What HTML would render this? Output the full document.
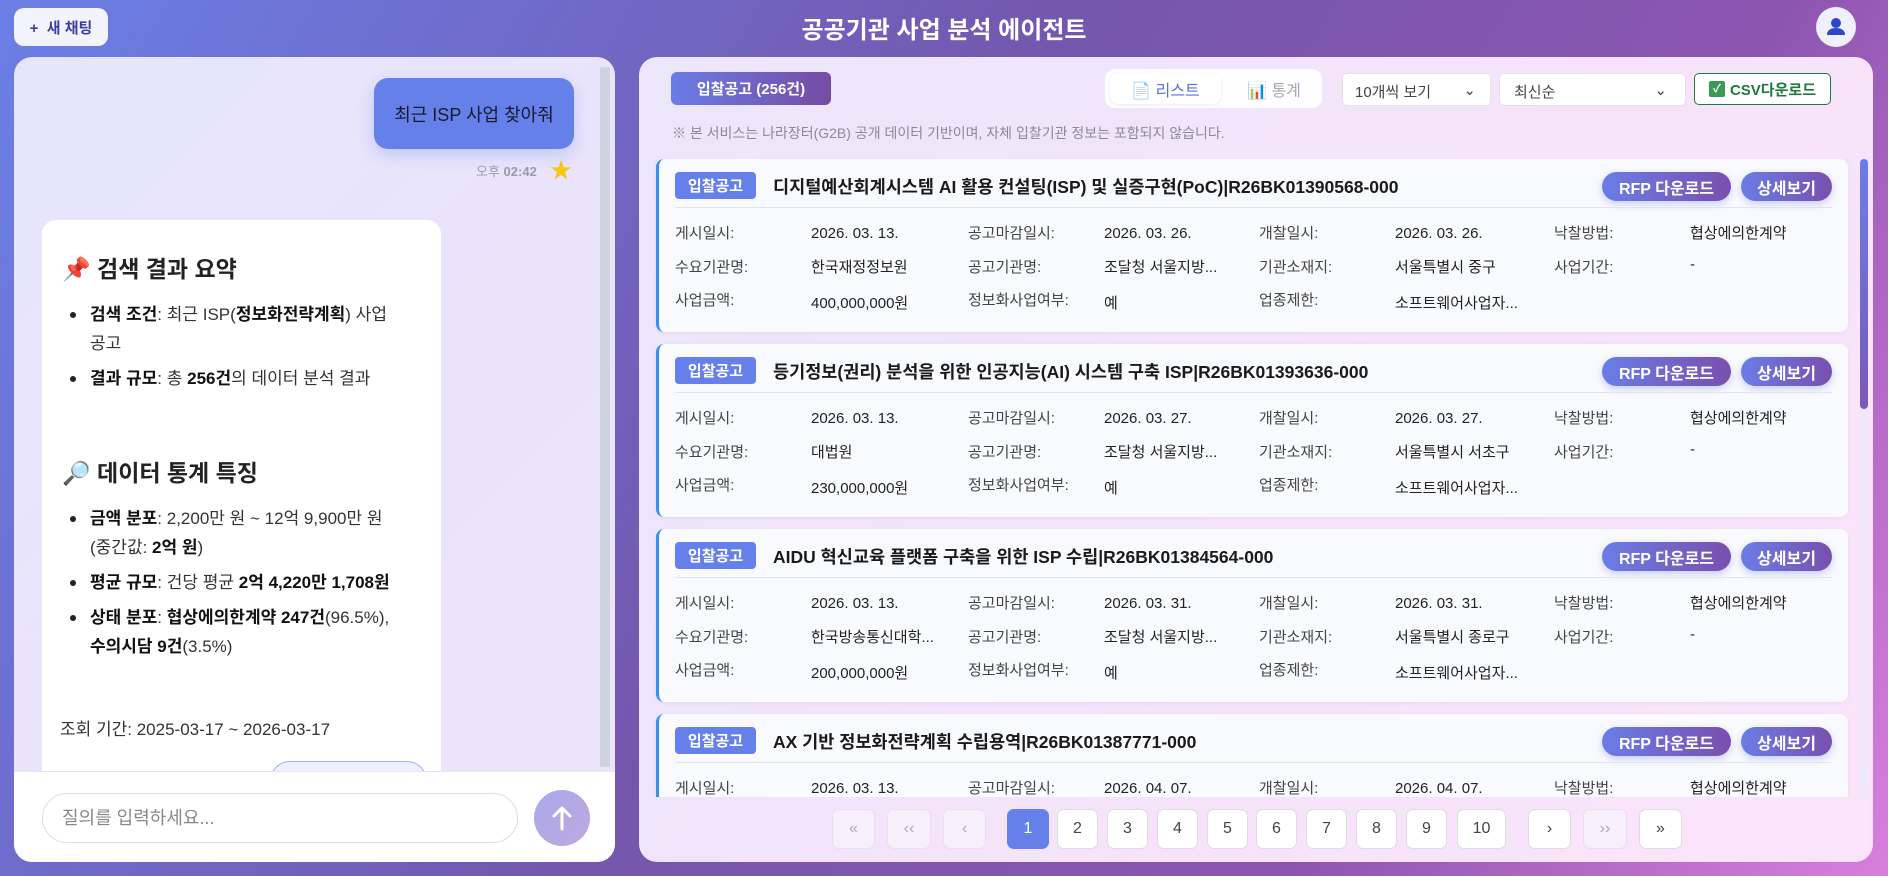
<!DOCTYPE html>
<html><head><meta charset="utf-8"><style>
*{box-sizing:border-box;margin:0;padding:0}
body{width:1888px;height:876px;overflow:hidden;position:relative;font-family:"Liberation Sans","Noto Sans CJK KR",sans-serif;background:linear-gradient(120deg,#6a7fe6 0%,#7457ad 45%,#8c55b0 75%,#d97fdc 100%);color:#222;word-break:keep-all}
.abs{position:absolute}
.newchat{left:14px;top:8px;width:94px;height:38px;background:#f3f3fd;border-radius:10px;color:#3b3fa0;font-size:15px;display:flex;align-items:center;justify-content:center;font-weight:600}
.title{left:0;width:1888px;top:10px;text-align:center;color:#fff;font-size:24px;font-weight:700}
.avatar{left:1816px;top:7px;width:40px;height:40px;border-radius:50%;background:#eef0fb}
.left{left:14px;top:57px;width:601px;height:805px;border-radius:18px;background:linear-gradient(135deg,#e6e5fc,#ede4fa);overflow:hidden}
.right{left:639px;top:57px;width:1234px;height:805px;border-radius:18px;background:linear-gradient(120deg,#ece6fb,#f6e3fa 60%,#fbe4fb)}
.bubble{left:360px;top:21px;width:200px;height:71px;border-radius:14px;background:#6680ea;color:#1a1a2e;font-size:18px;display:flex;align-items:center;justify-content:center;box-shadow:0 6px 16px rgba(102,128,234,.3)}
.acard{left:28px;top:163px;width:399px;height:620px;background:#fff;border-radius:14px}
.acard h3{position:absolute;left:20px;font-size:23px;font-weight:700;color:#222}
.acard ul{position:absolute;left:28px;width:345px;font-size:17px;line-height:29px;color:#333;list-style:none}
.acard li{position:relative;padding-left:20px;margin-bottom:6px}
.acard li:before{content:"";position:absolute;left:0;top:12px;width:6px;height:6px;border-radius:50%;background:#222}
.acard b{color:#111}
.bottom{left:0;top:714px;width:601px;height:91px;background:#fff;border-top:1px solid #e5e5ee}
.input{left:28px;top:21px;width:476px;height:50px;border-radius:25px;border:1px solid #ddd;font-size:18px;color:#888;padding-left:19px;line-height:48px}
.send{left:520px;top:18px;width:56px;height:56px;border-radius:50%;background:linear-gradient(135deg,#a7aaee,#c0a8dc)}
.btn{position:absolute;display:flex;align-items:center;justify-content:center}
.card{position:absolute;left:17px;width:1192px;height:173px;background:#f9fafd;border-radius:8px;border-left:3px solid #3b8df0;box-shadow:0 1px 4px rgba(0,0,0,.06);overflow:hidden}
.badge{left:16px;top:13px;width:81px;height:27px;background:#6680ea;color:#fff;font-size:15px;border-radius:4px;font-weight:600}
.ctitle{position:absolute;left:114px;top:15px;font-size:17.5px;font-weight:700;color:#1a1a1a;white-space:nowrap}
.pill{height:29px;top:13px;border-radius:15px;background:linear-gradient(90deg,#6a7de6,#7a4fae);color:#fff;font-size:16px;font-weight:700;box-shadow:0 3px 8px rgba(102,126,234,.35)}
.div{position:absolute;left:16px;right:16px;top:48px;height:1px;background:#e2e4ea}
.lab,.val{position:absolute;font-size:15px;white-space:nowrap}
.lab{color:#444}.val{color:#222}
.pg{position:absolute;top:809px;height:40px;border-radius:7px;background:#fff;border:1px solid #ddd;font-size:16px;color:#444;display:flex;align-items:center;justify-content:center}
.pg.dis{background:#f7effc;color:#aaa;border-color:#eadcf3}
</style></head><body>
<div class="abs newchat">+&nbsp; 새 채팅</div>
<div class="abs title">공공기관 사업 분석 에이전트</div>
<div class="abs avatar"><svg width="40" height="40" viewBox="0 0 40 40"><circle cx="20" cy="16" r="5" fill="#2f46c8"/><path d="M11 28c0-5 4-7 9-7s9 2 9 7z" fill="#2f46c8"/></svg></div>

<div class="abs left">
  <div class="abs" style="left:586px;top:10px;width:10px;height:700px;background:#cdd3df;border-radius:2px"></div>
  <div class="abs bubble">최근 ISP 사업 찾아줘</div>
  <div class="abs" style="left:462px;top:104px;font-size:13px;color:#9a9aa8">오후 <b>02:42</b></div>
  <div class="abs" style="left:536px;top:96px;font-size:22px;color:#f5c518">★</div>
  <div class="abs acard">
    <h3 style="top:30px">📌 검색 결과 요약</h3>
    <ul style="top:80px"><li><b>검색 조건</b>: 최근 ISP(<b>정보화전략계획</b>) 사업 공고</li><li><b>결과 규모</b>: 총 <b>256건</b>의 데이터 분석 결과</li></ul>
    <h3 style="top:234px">🔎 데이터 통계 특징</h3>
    <ul style="top:284px"><li><b>금액 분포</b>: 2,200만 원 ~ 12억 9,900만 원 (중간값: <b>2억 원</b>)</li><li><b>평균 규모</b>: 건당 평균 <b>2억 4,220만 1,708원</b></li><li><b>상태 분포</b>: <b>협상에의한계약 247건</b>(96.5%), <b>수의시담 9건</b>(3.5%)</li></ul>
    <div class="abs" style="left:18px;top:495px;font-size:17px;color:#333">조회 기간: 2025-03-17 ~ 2026-03-17</div>
    <div class="abs" style="left:228px;top:541px;width:157px;height:40px;border:1px solid #a5b0f3;border-radius:20px;background:#eef0ff"></div>
  </div>
  <div class="abs bottom">
    <div class="abs input">질의를 입력하세요...</div>
    <div class="abs send"><svg width="56" height="56" viewBox="0 0 56 56"><path d="M28 39V18M20 26l8-8 8 8" stroke="#fff" stroke-width="3" fill="none" stroke-linecap="round" stroke-linejoin="round"/></svg></div>
  </div>
</div>

<div class="abs right">
  <div class="btn" style="left:32px;top:15px;width:160px;height:33px;border-radius:6px;background:linear-gradient(90deg,#6a7de6,#764ba2);color:#fff;font-size:15px;font-weight:700">입찰공고 (256건)</div>
  <div class="abs" style="left:466px;top:12px;width:217px;height:39px;border-radius:10px;background:#fff;opacity:.9"></div>
  <div class="btn" style="left:471px;top:16px;width:111px;height:31px;border-radius:8px;background:#fff;box-shadow:0 1px 3px rgba(0,0,0,.08);color:#5a6fe0;font-size:16px">📄&nbsp;리스트</div>
  <div class="btn" style="left:590px;top:16px;width:90px;height:31px;color:#aaa;font-size:16px">📊&nbsp;통계</div>
  <div class="abs" style="left:703px;top:16px;width:149px;height:33px;background:#fff;border:1px solid #e2e2e8;border-radius:5px;font-size:15px;color:#444;padding:7px 12px">10개씩 보기<span style="position:absolute;right:14px">⌄</span></div>
  <div class="abs" style="left:860px;top:16px;width:187px;height:33px;background:#fff;border:1px solid #e2e2e8;border-radius:5px;font-size:15px;color:#444;padding:7px 14px">최신순<span style="position:absolute;right:18px">⌄</span></div>
  <div class="btn" style="left:1055px;top:16px;width:137px;height:32px;border:1px solid #1e7a3e;border-radius:5px;background:#fff;color:#1e7a3e;font-size:15px;font-weight:700"><span style="display:inline-block;width:16px;height:16px;background:#3a9a5a;color:#fff;font-size:11px;line-height:16px;text-align:center;border-radius:2px;margin-right:5px">✓</span>CSV다운로드</div>
  <div class="abs" style="left:33px;top:66px;font-size:14px;color:#8a8a96">※ 본 서비스는 나라장터(G2B) 공개 데이터 기반이며, 자체 입찰기관 정보는 포함되지 않습니다.</div>
  <div class="abs" style="left:1221px;top:102px;width:8px;height:640px;background:#efe8f8;border-radius:4px"></div>
  <div class="abs" style="left:1221px;top:102px;width:8px;height:250px;background:linear-gradient(#6a7de6,#7a5ab8);border-radius:4px"></div>
  <div class="abs" style="left:0;top:102px;width:1220px;height:638px;overflow:hidden">
  <div class="card" style="top:0">
    <div class="btn badge">입찰공고</div><div class="ctitle">디지털예산회계시스템 AI 활용 컨설팅(ISP) 및 실증구현(PoC)|R26BK01390568-000</div>
    <div class="btn pill" style="left:943px;width:129px">RFP 다운로드</div><div class="btn pill" style="left:1082px;width:91px">상세보기</div><div class="div"></div>
    <div class="lab" style="left:16px;top:63px">게시일시:</div><div class="val" style="left:152px;top:66px">2026. 03. 13.</div><div class="lab" style="left:309px;top:63px">공고마감일시:</div><div class="val" style="left:445px;top:66px">2026. 03. 26.</div><div class="lab" style="left:600px;top:63px">개찰일시:</div><div class="val" style="left:736px;top:66px">2026. 03. 26.</div><div class="lab" style="left:895px;top:63px">낙찰방법:</div><div class="val" style="left:1031px;top:63px">협상에의한계약</div>
    <div class="lab" style="left:16px;top:97px">수요기관명:</div><div class="val" style="left:152px;top:97px">한국재정정보원</div><div class="lab" style="left:309px;top:97px">공고기관명:</div><div class="val" style="left:445px;top:97px">조달청 서울지방...</div><div class="lab" style="left:600px;top:97px">기관소재지:</div><div class="val" style="left:736px;top:97px">서울특별시 중구</div><div class="lab" style="left:895px;top:97px">사업기간:</div><div class="val" style="left:1031px;top:97px">-</div>
    <div class="lab" style="left:16px;top:130px">사업금액:</div><div class="val" style="left:152px;top:133px">400,000,000원</div><div class="lab" style="left:309px;top:130px">정보화사업여부:</div><div class="val" style="left:445px;top:133px">예</div><div class="lab" style="left:600px;top:130px">업종제한:</div><div class="val" style="left:736px;top:133px">소프트웨어사업자...</div>
  </div>
  <div class="card" style="top:185px">
    <div class="btn badge">입찰공고</div><div class="ctitle">등기정보(권리) 분석을 위한 인공지능(AI) 시스템 구축 ISP|R26BK01393636-000</div>
    <div class="btn pill" style="left:943px;width:129px">RFP 다운로드</div><div class="btn pill" style="left:1082px;width:91px">상세보기</div><div class="div"></div>
    <div class="lab" style="left:16px;top:63px">게시일시:</div><div class="val" style="left:152px;top:66px">2026. 03. 13.</div><div class="lab" style="left:309px;top:63px">공고마감일시:</div><div class="val" style="left:445px;top:66px">2026. 03. 27.</div><div class="lab" style="left:600px;top:63px">개찰일시:</div><div class="val" style="left:736px;top:66px">2026. 03. 27.</div><div class="lab" style="left:895px;top:63px">낙찰방법:</div><div class="val" style="left:1031px;top:63px">협상에의한계약</div>
    <div class="lab" style="left:16px;top:97px">수요기관명:</div><div class="val" style="left:152px;top:97px">대법원</div><div class="lab" style="left:309px;top:97px">공고기관명:</div><div class="val" style="left:445px;top:97px">조달청 서울지방...</div><div class="lab" style="left:600px;top:97px">기관소재지:</div><div class="val" style="left:736px;top:97px">서울특별시 서초구</div><div class="lab" style="left:895px;top:97px">사업기간:</div><div class="val" style="left:1031px;top:97px">-</div>
    <div class="lab" style="left:16px;top:130px">사업금액:</div><div class="val" style="left:152px;top:133px">230,000,000원</div><div class="lab" style="left:309px;top:130px">정보화사업여부:</div><div class="val" style="left:445px;top:133px">예</div><div class="lab" style="left:600px;top:130px">업종제한:</div><div class="val" style="left:736px;top:133px">소프트웨어사업자...</div>
  </div>
  <div class="card" style="top:370px">
    <div class="btn badge">입찰공고</div><div class="ctitle">AIDU 혁신교육 플랫폼 구축을 위한 ISP 수립|R26BK01384564-000</div>
    <div class="btn pill" style="left:943px;width:129px">RFP 다운로드</div><div class="btn pill" style="left:1082px;width:91px">상세보기</div><div class="div"></div>
    <div class="lab" style="left:16px;top:63px">게시일시:</div><div class="val" style="left:152px;top:66px">2026. 03. 13.</div><div class="lab" style="left:309px;top:63px">공고마감일시:</div><div class="val" style="left:445px;top:66px">2026. 03. 31.</div><div class="lab" style="left:600px;top:63px">개찰일시:</div><div class="val" style="left:736px;top:66px">2026. 03. 31.</div><div class="lab" style="left:895px;top:63px">낙찰방법:</div><div class="val" style="left:1031px;top:63px">협상에의한계약</div>
    <div class="lab" style="left:16px;top:97px">수요기관명:</div><div class="val" style="left:152px;top:97px">한국방송통신대학...</div><div class="lab" style="left:309px;top:97px">공고기관명:</div><div class="val" style="left:445px;top:97px">조달청 서울지방...</div><div class="lab" style="left:600px;top:97px">기관소재지:</div><div class="val" style="left:736px;top:97px">서울특별시 종로구</div><div class="lab" style="left:895px;top:97px">사업기간:</div><div class="val" style="left:1031px;top:97px">-</div>
    <div class="lab" style="left:16px;top:130px">사업금액:</div><div class="val" style="left:152px;top:133px">200,000,000원</div><div class="lab" style="left:309px;top:130px">정보화사업여부:</div><div class="val" style="left:445px;top:133px">예</div><div class="lab" style="left:600px;top:130px">업종제한:</div><div class="val" style="left:736px;top:133px">소프트웨어사업자...</div>
  </div>
  <div class="card" style="top:555px">
    <div class="btn badge">입찰공고</div><div class="ctitle">AX 기반 정보화전략계획 수립용역|R26BK01387771-000</div>
    <div class="btn pill" style="left:943px;width:129px">RFP 다운로드</div><div class="btn pill" style="left:1082px;width:91px">상세보기</div><div class="div"></div>
    <div class="lab" style="left:16px;top:63px">게시일시:</div><div class="val" style="left:152px;top:66px">2026. 03. 13.</div><div class="lab" style="left:309px;top:63px">공고마감일시:</div><div class="val" style="left:445px;top:66px">2026. 04. 07.</div><div class="lab" style="left:600px;top:63px">개찰일시:</div><div class="val" style="left:736px;top:66px">2026. 04. 07.</div><div class="lab" style="left:895px;top:63px">낙찰방법:</div><div class="val" style="left:1031px;top:63px">협상에의한계약</div>
  </div>
  </div>
</div>

<div class="pg dis" style="left:832px;width:43px">«</div>
<div class="pg dis" style="left:887px;width:44px">‹‹</div>
<div class="pg dis" style="left:943px;width:43px">‹</div>
<div class="pg" style="left:1007px;width:42px;background:#6680ea;color:#fff;border-color:#6680ea">1</div>
<div class="pg" style="left:1057px;width:41px">2</div>
<div class="pg" style="left:1107px;width:41px">3</div>
<div class="pg" style="left:1157px;width:41px">4</div>
<div class="pg" style="left:1207px;width:41px">5</div>
<div class="pg" style="left:1256px;width:41px">6</div>
<div class="pg" style="left:1306px;width:41px">7</div>
<div class="pg" style="left:1356px;width:41px">8</div>
<div class="pg" style="left:1406px;width:41px">9</div>
<div class="pg" style="left:1457px;width:49px">10</div>
<div class="pg" style="left:1528px;width:43px">›</div>
<div class="pg dis" style="left:1583px;width:44px">››</div>
<div class="pg" style="left:1639px;width:43px">»</div>
</body></html>
